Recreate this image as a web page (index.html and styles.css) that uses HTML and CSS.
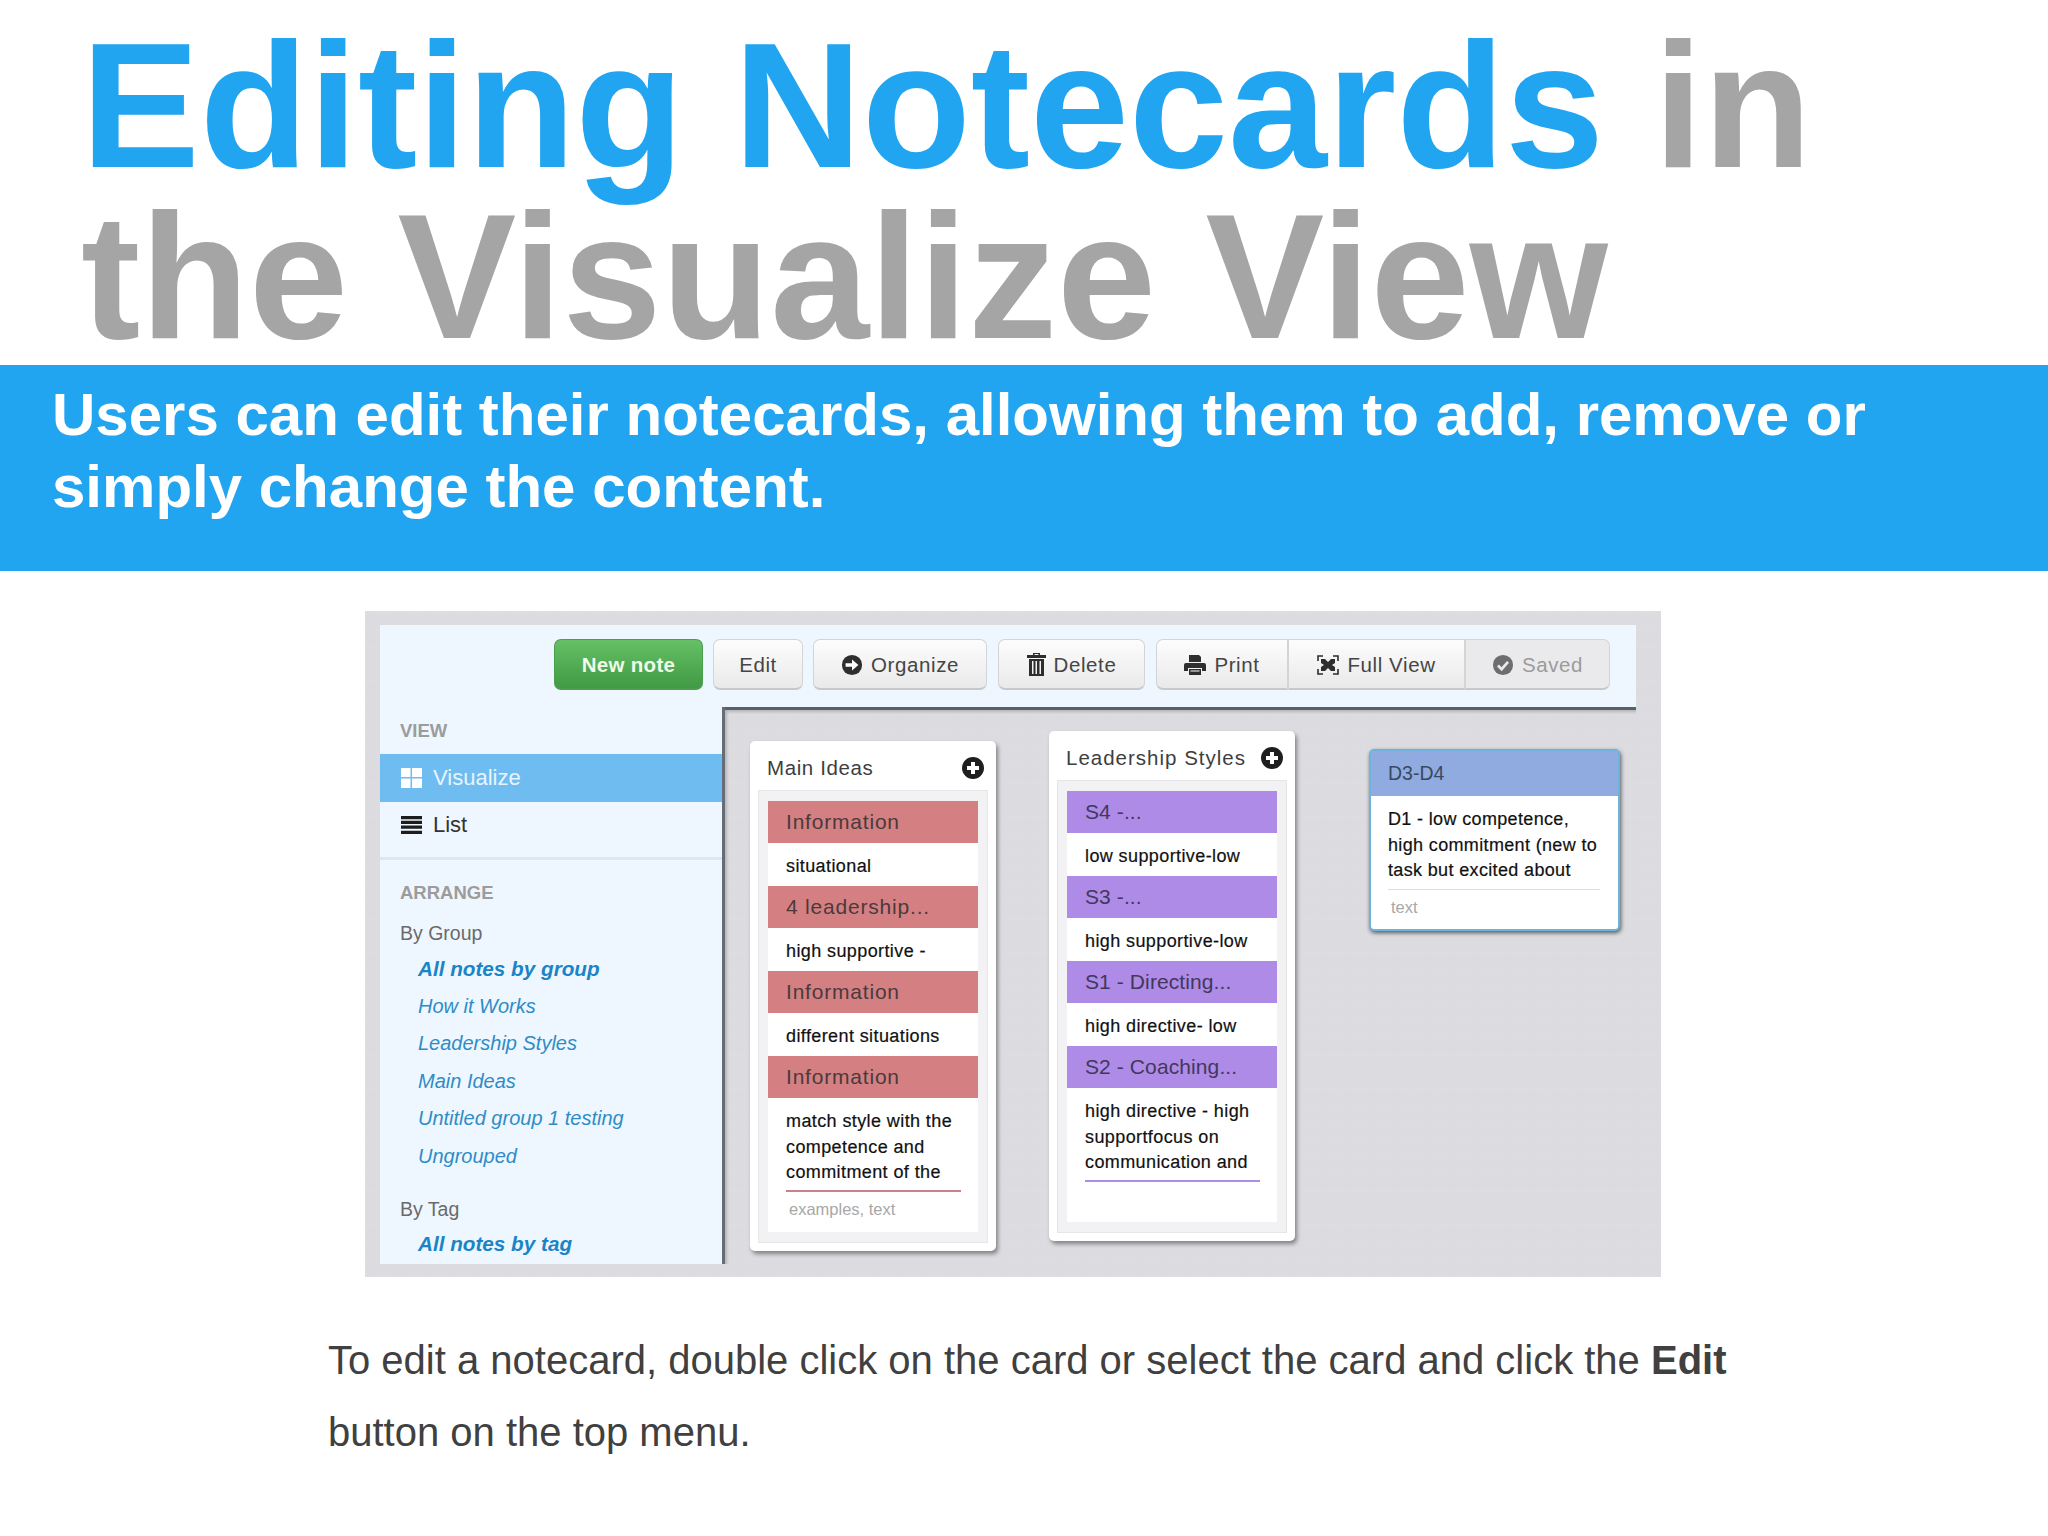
FILE: index.html
```html
<!DOCTYPE html>
<html lang="en">
<head>
  <meta charset="UTF-8">
  <title>Editing Notecards in the Visualize View</title>
  <link rel="stylesheet" href="styles.css">
</head>
<body>
  <h1 class="title"><span class="title-blue">Editing Notecards</span> in<br>the Visualize View</h1>

  <div class="band">
    <p>Users can edit their notecards, allowing them to add, remove or<br>simply change the content.</p>
  </div>

  <div class="shot">
    <div class="toolbar">
      <button class="btn btn-new">New note</button>
      <button class="btn btn-edit">Edit</button>
      <button class="btn btn-organize">
        <svg class="icon icon-round" viewBox="0 0 24 24"><circle cx="12" cy="12" r="11" fill="#2e2e2e"/><path d="M5 10h7V6l7 6-7 6v-4H5z" fill="#fff"/></svg>
        Organize
      </button>
      <button class="btn btn-delete">
        <svg class="icon icon-trash" viewBox="0 0 19 23"><path d="M6 0h7v2h6v3H0V2h6zM7.500 1v1h4V1z" fill="#2e2e2e" fill-rule="evenodd"/><path d="M2 6h15v17H2zM5 8v13h1.500V8zM8.500 8v13H10V8zM12.500 8v13H14V8z" fill="#2e2e2e" fill-rule="evenodd"/></svg>
        Delete
      </button>
      <div class="btn-group">
        <button class="btn btn-print">
          <svg class="icon" viewBox="0 0 22 20"><path d="M5 0h10l2 2v5H5z" fill="#2e2e2e"/><path d="M2 8h18a2 2 0 0 1 2 2v6h-4v-3H4v3H0v-6a2 2 0 0 1 2-2z" fill="#2e2e2e"/><path d="M5 14h12v6H5z" fill="#2e2e2e"/><path d="M6.500 15.500h9v1h-9z" fill="#fff"/></svg>
          Print
        </button>
        <button class="btn btn-full">
          <svg class="icon" viewBox="0 0 22 20"><path d="M1 6V1h5M16 1h5v5M21 14v5h-5M6 19H1v-5" fill="none" stroke="#2e2e2e" stroke-width="1.600"/><path d="M4 4h4l3 3 3-3h4v4l-3 2 3 2v4h-4l-3-3-3 3H4v-4l3-2-3-2z" fill="#2e2e2e"/></svg>
          Full View
        </button>
        <button class="btn btn-saved">
          <svg class="icon icon-round" viewBox="0 0 24 24"><circle cx="12" cy="12" r="11" fill="#6d6d6f"/><path d="M6.500 12.500l4 4 7-8" fill="none" stroke="#e8e8ea" stroke-width="3"/></svg>
          Saved
        </button>
      </div>
    </div>

    <div class="workspace">
      <div class="sidebar">
        <div class="side-label">VIEW</div>
        <div class="side-item active">
          <svg class="side-icon" viewBox="0 0 21 20"><path d="M0 0h9.500v9H0zM11 0h10v9H11zM0 10.500h9.500V20H0zM11 10.500h10V20H11z" fill="#fff"/></svg>
          Visualize
        </div>
        <div class="side-item">
          <svg class="side-icon" viewBox="0 0 22 19"><path d="M0 0h22v3.500H0zM0 5h22v3.500H0zM0 10h22v3.500H0zM0 15.500h22V19H0z" fill="#1d1d1d"/></svg>
          List
        </div>
        <div class="side-rule"></div>
        <div class="side-label">ARRANGE</div>
        <div class="side-sub">By Group</div>
        <a class="side-link strong" href="#">All notes by group</a>
        <a class="side-link" href="#">How it Works</a>
        <a class="side-link" href="#">Leadership Styles</a>
        <a class="side-link" href="#">Main Ideas</a>
        <a class="side-link" href="#">Untitled group 1 testing</a>
        <a class="side-link" href="#">Ungrouped</a>
        <div class="side-sub side-sub-tag">By Tag</div>
        <a class="side-link strong" href="#">All notes by tag</a>
      </div>

      <div class="canvas">
        <div class="group group-main">
          <div class="group-head">
            <span>Main Ideas</span>
            <svg class="plus" viewBox="0 0 22 22"><circle cx="11" cy="11" r="11" fill="#1f1f1f"/><path d="M9 5h4v4h4v4h-4v4H9v-4H5V9h4z" fill="#fff"/></svg>
          </div>
          <div class="group-box">
            <div class="note-head red">Information</div>
            <div class="note-body">situational</div>
            <div class="note-head red">4 leadership...</div>
            <div class="note-body">high supportive -</div>
            <div class="note-head red">Information</div>
            <div class="note-body">different situations</div>
            <div class="note-head red">Information</div>
            <div class="note-body note-last">
              match style with the<br>competence and<br>commitment of the
              <div class="note-rule red-rule"></div>
              <div class="note-tags">examples, text</div>
            </div>
          </div>
        </div>

        <div class="group group-styles">
          <div class="group-head">
            <span>Leadership Styles</span>
            <svg class="plus" viewBox="0 0 22 22"><circle cx="11" cy="11" r="11" fill="#1f1f1f"/><path d="M9 5h4v4h4v4h-4v4H9v-4H5V9h4z" fill="#fff"/></svg>
          </div>
          <div class="group-box">
            <div class="note-head purple">S4 -...</div>
            <div class="note-body">low supportive-low</div>
            <div class="note-head purple">S3 -...</div>
            <div class="note-body">high supportive-low</div>
            <div class="note-head purple">S1 - Directing...</div>
            <div class="note-body">high directive- low</div>
            <div class="note-head purple">S2 - Coaching...</div>
            <div class="note-body note-last">
              high directive - high<br>supportfocus on<br>communication and
              <div class="note-rule purple-rule"></div>
            </div>
          </div>
        </div>

        <div class="card">
          <div class="card-head">D3-D4</div>
          <div class="card-body">
            D1 - low competence,<br>high commitment (new to<br>task but excited about
            <div class="note-rule card-rule"></div>
            <div class="note-tags">text</div>
          </div>
        </div>
      </div>
    </div>
  </div>

  <p class="caption">To edit a notecard, double click on the card or select the card and click the <b>Edit</b><br>button on the top menu.</p>
</body>
</html>
```

FILE: styles.css
```css
:root {
  --blue: #22a5f1;
  --gray-title: #a5a5a5;
  --panel: #dcdce0;
  --side-bg: #eef7ff;
  --link: #2f8cc6;
}

* {
  box-sizing: border-box;
}

body {
  margin: 0;
  width: 2048px;
  height: 1536px;
  overflow: hidden;
  background-color: #fff;
  font-family: "Liberation Sans", Arial, sans-serif;
}

.title {
  margin: 0;
  padding: 20px 0 0 81px;
  height: 365px;
  font-size: 178px;
  line-height: 171px;
  font-weight: bold;
  color: var(--gray-title);
  white-space: nowrap;
}

.title-blue {
  color: var(--blue);
}

.band {
  height: 206px;
  padding: 14px 0 0 52px;
  background-color: var(--blue);
}

.band p {
  margin: 0;
  font-size: 60px;
  line-height: 72px;
  font-weight: bold;
  color: #fff;
  white-space: nowrap;
}

/* embedded app screenshot */
.shot {
  width: 1296px;
  height: 666px;
  margin: 40px 0 0 365px;
  padding: 14px 25px 0 15px;
  background-color: var(--panel);
  background-image:
    repeating-linear-gradient(0deg, rgba(255,255,255,0.03) 0 2px, transparent 2px 9px, rgba(255,255,255,0.02) 9px 10px, transparent 10px 17px),
    repeating-linear-gradient(90deg, rgba(255,255,255,0.03) 0 1px, transparent 1px 11px, rgba(255,255,255,0.02) 11px 13px, transparent 13px 23px);
}

.toolbar {
  display: flex;
  justify-content: flex-end;
  align-items: flex-start;
  height: 82px;
  padding: 14px 26px 0 0;
  background-color: var(--side-bg);
}

.btn {
  display: flex;
  align-items: center;
  justify-content: center;
  gap: 8px;
  height: 51px;
  margin-left: 11px;
  padding: 1px 0 0;
  font-family: inherit;
  font-size: 20.5px;
  letter-spacing: 0.6px;
  color: #454545;
  background: linear-gradient(#fdfdfd, #e9e9e9);
  border: 1px solid #d4d4d4;
  border-bottom: 2px solid #c8c8c8;
  border-radius: 7px;
}

.btn-new {
  width: 149px;
  margin-left: 0;
  font-weight: bold;
  letter-spacing: 0.3px;
  color: #eefbe8;
  background: linear-gradient(#65c066, #419a44);
  border-color: #4a9f4c;
}

.btn-edit {
  width: 90px;
  margin-left: 10px;
}

.btn-organize {
  width: 174px;
  margin-left: 10px;
}

.btn-delete {
  width: 147px;
}

.btn-group {
  display: flex;
  margin-left: 11px;
}

.btn-group .btn {
  margin-left: 0;
  border-radius: 0;
}

.btn-print {
  width: 133px;
}

.btn-group .btn-print {
  border-radius: 7px 0 0 7px;
  border-right-width: 2px;
}

.btn-full {
  width: 177px;
}

.btn-group .btn-full {
  border-left: none;
  border-right-width: 2px;
}

.btn-saved {
  width: 144px;
  color: #9b9b9b;
  background: #eaeaed;
}

.btn-group .btn-saved {
  border-left: none;
  border-radius: 0 7px 7px 0;
}

.icon {
  width: 22px;
  height: 20px;
  flex: none;
}

.icon-round {
  height: 22px;
}

.icon-trash {
  width: 19px;
  height: 23px;
}

.workspace {
  display: flex;
  align-items: flex-start;
}

.sidebar {
  flex: none;
  width: 345px;
  height: 557px;
  padding-top: 12px;
  background-color: var(--side-bg);
  border-right: 3px solid #666d78;
}

.side-label {
  padding-left: 20px;
  margin-bottom: 11px;
  font-size: 18.500px;
  line-height: 24px;
  font-weight: bold;
  color: #9c9c9c;
}

.side-item {
  display: flex;
  align-items: center;
  gap: 11px;
  height: 45px;
  padding-left: 21px;
  font-size: 22px;
  color: #333;
}

.side-item.active {
  height: 48px;
  color: #e7f4fd;
  background-color: #6fbcf0;
}

.side-icon {
  width: 21px;
  height: 20px;
  flex: none;
}

.side-rule {
  height: 3px;
  margin: 10px 0 21px;
  background-color: #dfe6ee;
}

.side-label + .side-sub {
  margin-top: 16px;
}

.side-sub {
  padding-left: 20px;
  font-size: 19.500px;
  line-height: 24px;
  color: #6a6a6a;
  margin-bottom: 5px;
}

.side-sub-tag {
  margin-top: 22px;
  margin-bottom: 4px;
}

.side-link {
  display: block;
  padding-left: 38px;
  font-size: 20px;
  line-height: 37.500px;
  font-style: italic;
  color: var(--link);
  text-decoration: none;
}

.side-link.strong {
  font-weight: bold;
  font-size: 20.700px;
  color: #1a84c6;
}

.canvas {
  flex: 1;
  display: flex;
  align-items: flex-start;
  height: 557px;
  padding-left: 25px;
  border-top: 3px solid #5a6069;
  box-shadow: inset 3px 3px 3px -1px rgba(0,0,0,0.18);
}

.group {
  flex: none;
  width: 246px;
  padding: 0 8px 8px;
  background-color: #fff;
  border-radius: 5px;
  box-shadow: 2px 3px 4px #808186;
}

.group-main {
  margin-top: 31px;
}

.group-styles {
  margin: 21px 0 0 53px;
}

.group-head {
  display: flex;
  align-items: center;
  justify-content: space-between;
  height: 49px;
  padding: 4px 4px 0 9px;
  font-size: 20.500px;
  letter-spacing: 0.6px;
  color: #3e3e3e;
}

.group-styles .group-head {
  letter-spacing: 1px;
}

.plus {
  width: 22px;
  height: 22px;
  flex: none;
}

.group-box {
  padding: 10px 9px;
  background-color: #f2f1f3;
  border: 1px solid #e6e6e6;
}

.note-head {
  height: 42px;
  padding-left: 18px;
  font-size: 21px;
  line-height: 42px;
  letter-spacing: 0.5px;
}

.note-head.red {
  letter-spacing: 0.8px;
  color: #4a3a3c;
  background-color: #d48083;
}

.note-head.purple {
  letter-spacing: 0.1px;
  color: #43385c;
  background-color: #ad8be6;
}

.note-body {
  height: 43px;
  padding: 11px 0 0 18px;
  font-size: 18px;
  line-height: 25.500px;
  letter-spacing: 0.4px;
  color: #111;
  background-color: #fff;
  -webkit-text-stroke: 0.2px #111;
  white-space: nowrap;
}

.note-last {
  height: 134px;
}

.note-rule {
  width: 175px;
  height: 2px;
  margin-top: 4px;
}

.red-rule {
  background-color: #cc8088;
}

.purple-rule {
  background-color: #ad8be6;
}

.note-tags {
  padding: 5px 0 0 3px;
  font-size: 16.500px;
  line-height: 24px;
  letter-spacing: 0;
  color: #a8a8a8;
  -webkit-text-stroke: 0;
}

.card {
  flex: none;
  width: 251px;
  height: 182px;
  margin: 39px 0 0 74px;
  background-color: #fff;
  border: 2px solid #6fb3dd;
  border-radius: 5px;
  box-shadow: 1px 2px 4px #55585e;
}

.card-head {
  height: 45px;
  padding-left: 17px;
  font-size: 19.500px;
  line-height: 44px;
  color: #3b4862;
  background-color: #8fabdf;
}

.card-body {
  padding: 11px 0 0 17px;
  font-size: 18px;
  line-height: 25.500px;
  letter-spacing: 0.35px;
  color: #111;
  -webkit-text-stroke: 0.2px #111;
  white-space: nowrap;
}

.card-rule {
  width: 212px;
  height: 1px;
  background-color: #dcdcdc;
  margin-top: 5px;
}

.caption {
  margin: 48px 0 0 328px;
  font-size: 40px;
  line-height: 71.500px;
  color: #404040;
  white-space: nowrap;
}
```
